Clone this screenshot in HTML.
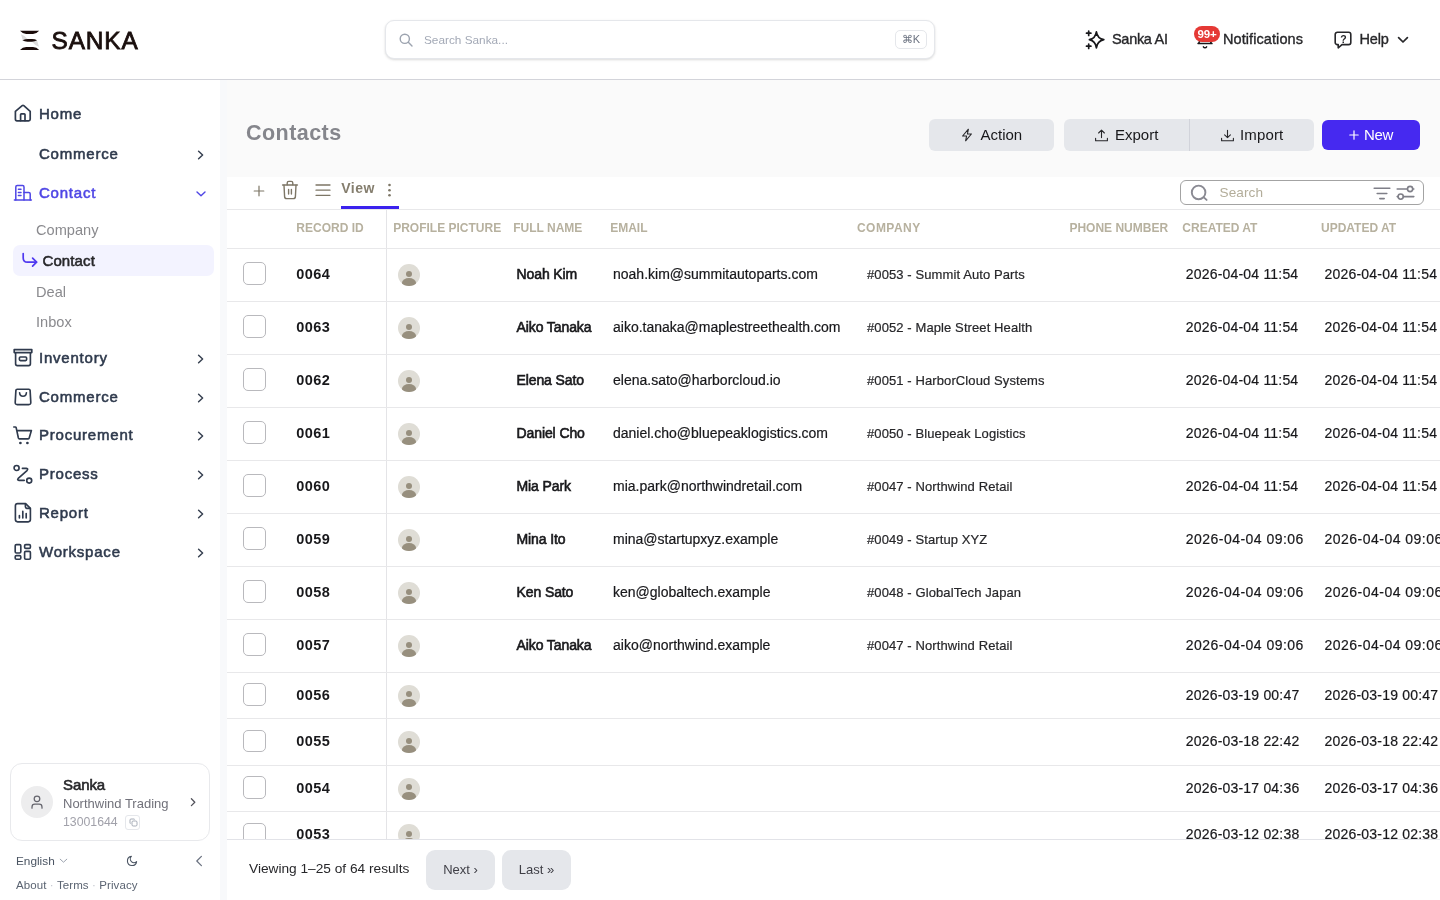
<!DOCTYPE html>
<html lang="en">
<head>
<meta charset="utf-8">
<title>Contacts - Sanka</title>
<style>
*{box-sizing:border-box;margin:0;padding:0}
html,body{width:1440px;height:900px;overflow:hidden;background:#fff}
body{font-family:"Liberation Sans",sans-serif;color:#1f2937;position:relative;-webkit-font-smoothing:antialiased}
#root{position:absolute;left:0;top:0;width:1440px;height:900px;overflow:hidden;will-change:transform}
.abs,.t{position:absolute}
.t{white-space:nowrap;line-height:20px;height:20px}
svg{position:absolute;overflow:visible}
/* header */
#hdr{position:absolute;left:0;top:0;width:1440px;height:80px;background:#fff;border-bottom:1.5px solid #d3d4da;z-index:5}
#gsearch{position:absolute;left:385px;top:20px;width:550px;height:39px;border:1px solid #e5e7eb;border-radius:9px;background:#fff;box-shadow:0 1px 3px rgba(0,0,0,.10),0 1px 2px rgba(0,0,0,.05)}
#kbd{position:absolute;left:895px;top:30px;width:32px;height:19px;border:1px solid #e5e7eb;border-radius:5px;font-size:11px;line-height:17px;text-align:center;color:#6b7280;letter-spacing:.3px}
.hl{font-size:14.5px;color:#27272a;-webkit-text-stroke:.35px #27272a}
#badge{position:absolute;left:1194px;top:26px;width:26px;height:16px;border-radius:8px;background:#e53935;color:#fff;font-size:11.5px;font-weight:bold;line-height:16px;text-align:center;letter-spacing:-.2px}
/* sidebar */
#side{position:absolute;left:0;top:80px;width:220px;height:820px;background:#fff}
.nav{font-size:15px;letter-spacing:.78px;color:#2f3a4d;left:39px;-webkit-text-stroke:.55px #2f3a4d;margin-top:.8px}
.nav.act{color:#4f46e5;-webkit-text-stroke-color:#4f46e5}
.sub{font-size:14.6px;color:#8a8a8e;left:36px}
#subact{position:absolute;left:13px;top:165px;width:201px;height:31px;border-radius:7px;background:#f3f3ff}
#ucard{position:absolute;left:10px;top:683px;width:200px;height:78px;border:1px solid #e8e9ec;border-radius:12px;background:#fff}
#uav{position:absolute;left:21px;top:706px;width:32px;height:32px;border-radius:50%;background:#ededee}
/* main */
#main{position:absolute;left:220px;top:80px;width:1220px;height:820px;background:#fafafa}
#strip{position:absolute;left:0;top:0;width:7px;height:820px;background:#f8f9fb}
#card{position:absolute;left:7px;top:97px;width:1213px;height:723px;background:#fff;overflow:hidden}
.btn{position:absolute;top:39px;height:32px;border-radius:6px;background:#e5e7eb}
.bl{font-size:15px;color:#18181b}
.hline{position:absolute;left:0;width:1213px;height:1px;background:#e8e8ea}
.th{font-size:12px;font-weight:bold;color:#b7b19f}
.cb{position:absolute;left:16.1px;width:22.5px;height:22.5px;border:1px solid #b9b9bd;border-radius:5px;background:#fff}
.av{position:absolute;left:171.2px;width:21.8px;height:21.8px;border-radius:50%;background:#dfddd6;overflow:hidden}
.av:before{content:"";position:absolute;left:7.9px;top:6.4px;width:6px;height:6px;border-radius:50%;background:#978f7e}
.av:after{content:"";position:absolute;left:3.6px;top:13.9px;width:14.6px;height:9.8px;border-radius:50%;background:#978f7e}
.id{font-size:14.5px;font-weight:bold;color:#18181b;left:69.3px;letter-spacing:.45px}
.nm{font-size:14px;color:#18181b;left:289.5px;-webkit-text-stroke:.6px #18181b;letter-spacing:-.1px}
.em{font-size:14px;color:#18181b;left:386px;-webkit-text-stroke:.2px currentColor}
.co{font-size:13px;color:#27272a;left:640px;letter-spacing:.1px;-webkit-text-stroke:.2px currentColor}
.d1{font-size:14px;color:#18181b;left:958.8px;letter-spacing:.19px;-webkit-text-stroke:.2px currentColor}
.d2{font-size:14px;color:#18181b;left:1097.6px;letter-spacing:.19px;-webkit-text-stroke:.2px currentColor}
#foot{position:absolute;left:0;top:661.6px;width:1213px;height:61px;background:#fff;border-top:1.5px solid #e2e3e8}
.pg{position:absolute;top:10.5px;width:69px;height:40px;border-radius:9px;background:#e5e7eb;font-size:13px;color:#3f3f46;text-align:center;line-height:40px}
</style>
</head>
<body>
<div id="root">
<div id="hdr">
<!-- logo -->
<svg style="left:0;top:0" width="60" height="60" viewBox="0 0 60 60">
<defs><linearGradient id="lg1" x1="0" y1="0" x2="1" y2="1"><stop offset="0" stop-color="#e4e2e2"/><stop offset="1" stop-color="#cfcccc"/></linearGradient></defs>
<path d="M21 34.2 L22.6 39.8 L27.6 39 Q24.5 35.5 21 34.2 Z" fill="#dddbdb"/>
<path d="M32 41.8 L37.2 41 L39 46.8 Q35 45.6 32 41.8 Z" fill="#dddbdb"/>
<path d="M20 30.8 L39.2 30.8 Q36.6 33.9 33 33.9 L26.2 33.9 Q22.6 33.9 20 30.8 Z" fill="#1a0b09"/>
<path d="M22.4 40.35 Q25 38.9 28 38.9 L32 38.9 Q35 38.9 37.1 40.35 Q35 41.8 32 41.8 L27.5 41.8 Q24.5 41.8 22.4 40.35 Z" fill="#1a0b09"/>
<path d="M20 49.9 L39.2 49.9 Q36.6 47 33 47 L26.2 47 Q22.6 47 20 49.9 Z" fill="#1a0b09"/>
</svg>
<div class="t" id="logo" style="left:51.5px;top:25.5px;height:30px;line-height:30px;font-size:24.4px;color:#1a0f0d;letter-spacing:.9px;-webkit-text-stroke:.8px #1a0f0d">SANKA</div>
<!-- global search -->
<div id="gsearch"></div>
<svg style="left:399px;top:33px" width="14" height="14" viewBox="0 0 14 14" fill="none" stroke="#9ca3af" stroke-width="1.4" stroke-linecap="round"><circle cx="5.8" cy="5.8" r="4.6"/><path d="M9.3 9.3 L13 13"/></svg>
<div class="t" style="left:424px;top:30px;font-size:11.8px;color:#a3a9b6">Search Sanka...</div>
<div id="kbd">&#8984;K</div>
<!-- Sanka AI -->
<svg style="left:1085px;top:30px" width="20" height="20" viewBox="0 0 20 20" fill="none" stroke="#18181b" stroke-width="1.7" stroke-linecap="round" stroke-linejoin="round">
<path d="M11.4 1.8 Q12.4 8.4 18.8 9.7 Q12.4 11 11.4 17.8 Q10.4 11 4.4 9.7 Q10.4 8.4 11.4 1.8 Z"/>
<path d="M3.7 1 V5.4 M1.5 3.2 H5.9"/>
<path d="M3.7 14 V18.4 M1.5 16.2 H5.9"/>
</svg>
<div class="t hl" style="left:1112px;top:29px;letter-spacing:-.3px">Sanka AI</div>
<!-- notifications -->
<svg style="left:1195px;top:30px" width="20" height="20" viewBox="0 0 20 20" fill="none" stroke="#18181b" stroke-width="1.5" stroke-linecap="round" stroke-linejoin="round">
<path d="M5 8 A5 5 0 0 1 15 8 C15 12.5 17 13.6 17 13.6 H3 C3 13.6 5 12.5 5 8 Z"/>
<path d="M8.4 16.8 A1.9 1.9 0 0 0 11.6 16.8"/>
</svg>
<div id="badge">99+</div>
<div class="t hl" style="left:1223px;top:29px;letter-spacing:.08px">Notifications</div>
<!-- help -->
<svg style="left:1334px;top:31px" width="18" height="18" viewBox="0 0 18 18" fill="none" stroke="#27272a" stroke-width="1.6" stroke-linecap="round" stroke-linejoin="round">
<path d="M3.4 1.2 H14.6 A2.2 2.2 0 0 1 16.8 3.4 V11.4 A2.2 2.2 0 0 1 14.6 13.6 H8 L4.2 16.8 V13.6 H3.4 A2.2 2.2 0 0 1 1.2 11.4 V3.4 A2.2 2.2 0 0 1 3.4 1.2 Z"/>
</svg>
<div class="t" style="left:1339.5px;top:28.5px;font-size:10.5px;font-weight:bold;color:#27272a;width:8px;text-align:center">?</div>
<div class="t hl" style="left:1359.5px;top:29px;letter-spacing:-.2px">Help</div>
<svg style="left:1397px;top:36px" width="12" height="8" viewBox="0 0 12 8" fill="none" stroke="#27272a" stroke-width="1.7" stroke-linecap="round" stroke-linejoin="round"><path d="M1.6 1.6 L6 6 L10.4 1.6"/></svg>
</div>
<div id="side">
<!-- Home -->
<svg style="left:13px;top:23px" width="20" height="20" viewBox="0 0 20 20" fill="none" stroke="#2f3a4d" stroke-width="1.7" stroke-linecap="round" stroke-linejoin="round">
<path d="M2.4 8.4 L9.2 2.6 Q10 2 10.8 2.6 L17.2 8.4 V16.2 Q17.2 17.8 15.6 17.8 H4 Q2.4 17.8 2.4 16.2 Z"/>
<path d="M7.6 17.6 V11.6 Q7.6 10.8 8.4 10.8 H11.2 Q12 10.8 12 11.6 V17.6"/>
</svg>
<div class="t nav" style="top:23px">Home</div>
<div class="t nav" style="top:63px">Commerce</div><svg style="left:197px;top:69.5px" width="8" height="10" viewBox="0 0 8 10" fill="none" stroke="#374151" stroke-width="1.5" stroke-linecap="round" stroke-linejoin="round"><path d="M1.6 1.2 L5.6 5 L1.6 8.8"/></svg>
<!-- Contact -->
<svg style="left:13px;top:103px" width="20" height="20" viewBox="0 0 20 20" fill="none" stroke="#4f46e5" stroke-width="1.5" stroke-linecap="round" stroke-linejoin="round">
<path d="M1.4 17 H18.4"/>
<path d="M2.8 17 V4 Q2.8 2.6 4.2 2.6 H9.6 Q11 2.6 11 4 V17"/>
<path d="M11 9.4 H15.8 Q17.2 9.4 17.2 10.8 V17"/>
<path d="M5.4 6.2 H8 M5.4 9.4 H8 M5.4 12.6 H8"/>
</svg>
<div class="t nav act" style="top:102px">Contact</div>
<svg style="left:196px;top:110.5px" width="10" height="6" viewBox="0 0 10 6" fill="none" stroke="#4f46e5" stroke-width="1.4" stroke-linecap="round" stroke-linejoin="round"><path d="M1 1 L5 4.8 L9 1"/></svg>
<div class="t sub" style="top:140px">Company</div>
<div id="subact"></div>
<svg style="left:21px;top:172px" width="18" height="16" viewBox="0 0 18 16" fill="none" stroke="#4f39f0" stroke-width="1.7" stroke-linecap="round" stroke-linejoin="round">
<path d="M2.2 1.6 V6 Q2.2 10.2 6.4 10.2 H15.4"/><path d="M11.6 6.2 L15.6 10.2 L11.6 14.2"/>
</svg>
<div class="t" style="left:42.5px;top:171px;font-size:15px;color:#27272a;-webkit-text-stroke:.55px #27272a;letter-spacing:.1px">Contact</div>
<div class="t sub" style="top:202px">Deal</div>
<div class="t sub" style="top:232px">Inbox</div>
<!-- Inventory -->
<svg style="left:13px;top:268px" width="20" height="20" viewBox="0 0 20 20" fill="none" stroke="#2f3a4d" stroke-width="1.65" stroke-linecap="round" stroke-linejoin="round">
<path d="M1.2 1.6 H18.8 V4.6 H1.2 Z"/>
<path d="M2.6 4.8 V15.8 Q2.6 17.6 4.4 17.6 H15.6 Q17.4 17.6 17.4 15.8 V4.8"/>
<rect x="6.4" y="9" width="7.2" height="3.6" rx="1"/>
</svg>
<div class="t nav" style="top:267px">Inventory</div><svg style="left:197px;top:273.5px" width="8" height="10" viewBox="0 0 8 10" fill="none" stroke="#374151" stroke-width="1.5" stroke-linecap="round" stroke-linejoin="round"><path d="M1.6 1.2 L5.6 5 L1.6 8.8"/></svg>
<!-- Commerce -->
<svg style="left:13px;top:307px" width="20" height="20" viewBox="0 0 20 20" fill="none" stroke="#2f3a4d" stroke-width="1.65" stroke-linecap="round" stroke-linejoin="round">
<path d="M4.2 2.2 H15.8 Q17 2.2 17.1 3.4 L17.8 15.4 Q17.9 17.6 15.8 17.6 H4.2 Q2.1 17.6 2.2 15.4 L2.9 3.4 Q3 2.2 4.2 2.2 Z"/>
<path d="M6.6 5.8 Q6.8 9.2 10 9.2 Q13.2 9.2 13.4 5.8"/>
</svg>
<div class="t nav" style="top:306px">Commerce</div><svg style="left:197px;top:312.5px" width="8" height="10" viewBox="0 0 8 10" fill="none" stroke="#374151" stroke-width="1.5" stroke-linecap="round" stroke-linejoin="round"><path d="M1.6 1.2 L5.6 5 L1.6 8.8"/></svg>
<!-- Procurement -->
<svg style="left:13px;top:345px" width="20" height="20" viewBox="0 0 20 20" fill="none" stroke="#2f3a4d" stroke-width="1.65" stroke-linecap="round" stroke-linejoin="round">
<path d="M0.8 2 H2.2 Q3 2 3.2 2.8 L5.4 13 Q5.6 13.8 6.4 13.8 H15.2 Q16 13.8 16.2 13 L18.4 5.6 H4"/>
<circle cx="7.4" cy="18" r="1.35" fill="#2f3a4d" stroke="none"/><circle cx="14.4" cy="18" r="1.35" fill="#2f3a4d" stroke="none"/>
</svg>
<div class="t nav" style="top:344px">Procurement</div><svg style="left:197px;top:351px" width="8" height="10" viewBox="0 0 8 10" fill="none" stroke="#374151" stroke-width="1.5" stroke-linecap="round" stroke-linejoin="round"><path d="M1.6 1.2 L5.6 5 L1.6 8.8"/></svg>
<!-- Process -->
<svg style="left:13px;top:384px" width="20" height="20" viewBox="0 0 20 20" fill="none" stroke="#2f3a4d" stroke-width="1.65" stroke-linecap="round" stroke-linejoin="round">
<circle cx="3.6" cy="4" r="2.5"/><circle cx="16.2" cy="16.6" r="2.5"/>
<path d="M9.4 4.4 H13.4 Q15.6 4.6 14 6.6 L5.2 14.4 Q3.8 16.2 6 16.4 H11.2"/>
</svg>
<div class="t nav" style="top:383px">Process</div><svg style="left:197px;top:389.5px" width="8" height="10" viewBox="0 0 8 10" fill="none" stroke="#374151" stroke-width="1.5" stroke-linecap="round" stroke-linejoin="round"><path d="M1.6 1.2 L5.6 5 L1.6 8.8"/></svg>
<!-- Report -->
<svg style="left:13px;top:422px" width="20" height="22" viewBox="0 0 20 22" fill="none" stroke="#2f3a4d" stroke-width="1.65" stroke-linecap="round" stroke-linejoin="round">
<path d="M4.6 1.6 H12.6 L17.4 6.4 V17.6 Q17.4 19.8 15.2 19.8 H4.6 Q2.4 19.8 2.4 17.6 V3.8 Q2.4 1.6 4.6 1.6 Z"/>
<path d="M12.4 1.8 V4.8 Q12.4 6.4 14 6.4 H17.2"/>
<path d="M6.4 13.6 V16 M9.8 9.4 V16 M13.2 11.6 V16"/>
</svg>
<div class="t nav" style="top:422px">Report</div><svg style="left:197px;top:428.5px" width="8" height="10" viewBox="0 0 8 10" fill="none" stroke="#374151" stroke-width="1.5" stroke-linecap="round" stroke-linejoin="round"><path d="M1.6 1.2 L5.6 5 L1.6 8.8"/></svg>
<!-- Workspace -->
<svg style="left:13px;top:462px" width="20" height="20" viewBox="0 0 20 20" fill="none" stroke="#2f3a4d" stroke-width="1.65" stroke-linejoin="round">
<rect x="2.2" y="2.6" width="5.6" height="8.4" rx="1.2"/><rect x="11.6" y="2.6" width="5.8" height="3.8" rx="1.2"/>
<rect x="2.2" y="13.6" width="5.6" height="3.6" rx="1.2"/><rect x="11.6" y="9.4" width="5.8" height="7.8" rx="1.2"/>
</svg>
<div class="t nav" style="top:461px">Workspace</div><svg style="left:197px;top:467.5px" width="8" height="10" viewBox="0 0 8 10" fill="none" stroke="#374151" stroke-width="1.5" stroke-linecap="round" stroke-linejoin="round"><path d="M1.6 1.2 L5.6 5 L1.6 8.8"/></svg>
<!-- user card -->
<div id="ucard"></div>
<div id="uav"></div>
<svg style="left:29px;top:714px" width="16" height="16" viewBox="0 0 16 16" fill="none" stroke="#65656d" stroke-width="1.25" stroke-linecap="round" stroke-linejoin="round">
<circle cx="8" cy="4.8" r="2.8"/><path d="M3 14.2 V13 Q3 10.2 5.8 10.2 H10.2 Q13 10.2 13 13 V14.2"/>
</svg>
<div class="t" style="left:63px;top:695px;font-size:15px;color:#27272a;-webkit-text-stroke:.6px #27272a;letter-spacing:-.1px">Sanka</div>
<div class="t" style="left:63px;top:713.5px;font-size:13px;color:#71717a">Northwind Trading</div>
<div class="t" style="left:63px;top:732px;font-size:12.3px;color:#a1a1aa">13001644</div>
<div class="abs" style="left:125px;top:734.5px;width:15px;height:15px;border:1px solid #e5e7eb;border-radius:3px"></div>
<svg style="left:128.5px;top:738px" width="9" height="9" viewBox="0 0 9 9" fill="none" stroke="#9ca3af" stroke-width="0.9" stroke-linejoin="round"><rect x="3" y="3" width="5" height="5" rx="1.2"/><path d="M1.6 5.6 Q1 5.6 1 5 V2 Q1 1 2 1 H5 Q5.6 1 5.6 1.6"/></svg>
<svg style="left:189px;top:717px" width="8" height="10" viewBox="0 0 8 10" fill="none" stroke="#52525b" stroke-width="1.3" stroke-linecap="round" stroke-linejoin="round"><path d="M2.4 1.8 L5.8 5.2 L2.4 8.6"/></svg>
<!-- bottom -->
<div class="t" style="left:16px;top:771px;font-size:11.8px;color:#4b5563">English</div>
<svg style="left:59px;top:778px" width="9" height="6" viewBox="0 0 9 6" fill="none" stroke="#9ca3af" stroke-width="1" stroke-linecap="round" stroke-linejoin="round"><path d="M1.2 1.2 L4.5 4.2 L7.8 1.2"/></svg>
<svg style="left:126px;top:775px" width="12" height="12" viewBox="0 0 12 12" fill="none" stroke="#4b5563" stroke-width="1.1" stroke-linecap="round" stroke-linejoin="round"><path d="M5.4 1.4 A4.6 4.6 0 1 0 10.6 6.6 A3.6 3.6 0 0 1 5.4 1.4 Z"/></svg>
<svg style="left:193.8px;top:775px" width="10" height="12" viewBox="0 0 10 12" fill="none" stroke="#6b7280" stroke-width="1.25" stroke-linecap="round" stroke-linejoin="round"><path d="M7.4 1.4 L2.8 6 L7.4 10.6"/></svg>
<div class="t" style="left:16px;top:795px;font-size:11.5px;color:#5b6472;letter-spacing:.1px">About <span style="color:#c4c7cf">·</span> Terms <span style="color:#c4c7cf">·</span> Privacy</div>
</div>
<div id="main">
<div id="strip"></div>
<div class="t" id="title" style="left:26px;top:37.5px;height:30px;line-height:30px;font-size:21.5px;font-weight:bold;color:#85868c;letter-spacing:.45px">Contacts</div>
<div class="btn" style="left:709px;width:125px"></div>
<svg style="left:741px;top:48px" width="12" height="14" viewBox="0 0 12 14" fill="none" stroke="#27272a" stroke-width="1.1" stroke-linecap="round" stroke-linejoin="round"><path d="M7.4 1.2 L1.6 8 H5.6 L4.6 12.8 L10.4 6 H6.4 Z"/></svg>
<div class="t bl" style="left:760.5px;top:45px">Action</div>
<div class="btn" style="left:844px;width:250px"></div>
<div class="abs" style="left:969px;top:39px;width:1px;height:32px;background:#d1d3da"></div>
<svg style="left:874px;top:48.5px" width="15" height="13" viewBox="0 0 15 13" fill="none" stroke="#27272a" stroke-width="1.1" stroke-linecap="round" stroke-linejoin="round"><path d="M1.6 9.2 V11.8 H13.4 V9.2"/><path d="M7.5 8.6 V1.2 M4.6 4 L7.5 1.2 L10.4 4"/></svg>
<div class="t bl" style="left:895px;top:45px">Export</div>
<svg style="left:1000px;top:48.5px" width="15" height="13" viewBox="0 0 15 13" fill="none" stroke="#27272a" stroke-width="1.1" stroke-linecap="round" stroke-linejoin="round"><path d="M1.6 9.2 V11.8 H13.4 V9.2"/><path d="M7.5 1.2 V8.6 M4.6 5.8 L7.5 8.6 L10.4 5.8"/></svg>
<div class="t bl" style="left:1020px;top:45px;letter-spacing:.15px">Import</div>
<div class="abs" style="left:1102px;top:39.7px;width:98px;height:30.4px;border-radius:6px;background:#4629f0"></div>
<svg style="left:1128.5px;top:50.3px" width="10" height="10" viewBox="0 0 10 10" fill="none" stroke="#fff" stroke-width="1.2" stroke-linecap="round"><path d="M5 0.8 V9.2 M0.8 5 H9.2"/></svg>
<div class="t bl" style="left:1144px;top:45px;color:#fff;letter-spacing:-.3px">New</div>

<div id="card">
<!-- toolbar -->
<svg style="left:26px;top:8px" width="12" height="12" viewBox="0 0 12 12" fill="none" stroke="#7d7666" stroke-width="1.2" stroke-linecap="round"><path d="M6 1.2 V10.8 M1.2 6 H10.8"/></svg>
<svg style="left:54px;top:3px" width="18" height="20" viewBox="0 0 18 20" fill="none" stroke="#7d7666" stroke-width="1.4" stroke-linecap="round" stroke-linejoin="round">
<path d="M1.6 5 H16.4"/><path d="M6.2 4.8 V3 Q6.2 1.4 7.8 1.4 H10.2 Q11.8 1.4 11.8 3 V4.8"/>
<path d="M3 5.2 L3.6 16.6 Q3.7 18.6 5.7 18.6 H12.3 Q14.3 18.6 14.4 16.6 L15 5.2"/>
<path d="M7.6 9.4 V14 M10.4 9.4 V14"/>
</svg>
<svg style="left:88px;top:7px" width="16" height="12" viewBox="0 0 16 12" fill="none" stroke="#7d7666" stroke-width="1.3" stroke-linecap="round"><path d="M1 1 H15 M1 6.2 H15 M1 11.3 H15"/></svg>
<div class="t" style="left:114.3px;top:1.3000000000000007px;font-size:14px;font-weight:bold;color:#857e6e;letter-spacing:.45px">View</div>
<svg style="left:159.5px;top:6px" width="5" height="14" viewBox="0 0 5 14" fill="#7d7666"><circle cx="2.5" cy="2" r="1.3"/><circle cx="2.5" cy="7.2" r="1.3"/><circle cx="2.5" cy="12.3" r="1.3"/></svg>
<div class="abs" style="left:114.2px;top:28.8px;width:57.8px;height:3.4px;background:#3b22ee"></div>
<!-- table search -->
<div class="abs" style="left:953px;top:3px;width:244px;height:25px;border:1px solid #a3a3a3;border-radius:6px;background:#fff"></div>
<svg style="left:962.5px;top:7px" width="20" height="18" viewBox="0 0 20 18" fill="none" stroke="#8a8a93" stroke-width="1.9" stroke-linecap="round"><circle cx="8.6" cy="8.4" r="6.8"/><path d="M13.8 13.4 L16.6 15.9"/></svg>
<div class="t" style="left:992.5px;top:6px;font-size:13.6px;color:#b3ad9a;letter-spacing:.1px">Search</div>
<svg style="left:1145.5px;top:9.5px" width="18" height="13" viewBox="0 0 18 13" fill="none" stroke="#7f7f88" stroke-width="1.6" stroke-linecap="round"><path d="M1.2 1.3 H16.8 M4.2 6.5 H13.8 M6.8 11.6 H11.2"/></svg>
<svg style="left:1168.5px;top:8px" width="19" height="16" viewBox="0 0 19 16" fill="none" stroke="#7f7f88" stroke-width="1.6" stroke-linecap="round"><path d="M1.2 4 H11.4 M16.8 4 H17.8 M1.2 11.6 H2 M7.4 11.6 H17.8"/><circle cx="14.1" cy="4" r="2.6"/><circle cx="4.7" cy="11.6" r="2.6"/></svg>
<div class="hline" style="top:32px"></div>
<!-- header row -->
<div class="abs" style="left:159px;top:33px;width:1px;height:640px;background:#e4e4e7"></div>
<div class="t th" style="left:69.3px;top:41px">RECORD ID</div>
<div class="t th" style="left:166.2px;top:41px">PROFILE PICTURE</div>
<div class="t th" style="left:286.2px;top:41px">FULL NAME</div>
<div class="t th" style="left:383.2px;top:41px">EMAIL</div>
<div class="t th" style="left:630px;top:41px;letter-spacing:.45px">COMPANY</div>
<div class="t th" style="left:842.4px;top:41px">PHONE NUMBER</div>
<div class="t th" style="left:955.3px;top:41px">CREATED AT</div>
<div class="t th" style="left:1094px;top:41px">UPDATED AT</div>
<!--ROWS-->
<div class="hline" style="top:71px"></div><div class="cb" style="top:85.3px"></div><div class="t id" style="top:87.25px">0064</div><div class="av" style="top:87.2px"></div><div class="t nm" style="top:87.25px">Noah Kim</div><div class="t em" style="top:87.25px">noah.kim@summitautoparts.com</div><div class="t co" style="top:87.8px">#0053 - Summit Auto Parts</div><div class="t d1" style="top:87.25px">2026-04-04 11:54</div><div class="t d2" style="top:87.25px">2026-04-04 11:54</div>
<div class="hline" style="top:124px"></div><div class="cb" style="top:138.3px"></div><div class="t id" style="top:140.25px">0063</div><div class="av" style="top:140.2px"></div><div class="t nm" style="top:140.25px">Aiko Tanaka</div><div class="t em" style="top:140.25px">aiko.tanaka@maplestreethealth.com</div><div class="t co" style="top:140.8px">#0052 - Maple Street Health</div><div class="t d1" style="top:140.25px">2026-04-04 11:54</div><div class="t d2" style="top:140.25px">2026-04-04 11:54</div>
<div class="hline" style="top:177px"></div><div class="cb" style="top:191.3px"></div><div class="t id" style="top:193.25px">0062</div><div class="av" style="top:193.2px"></div><div class="t nm" style="top:193.25px">Elena Sato</div><div class="t em" style="top:193.25px">elena.sato@harborcloud.io</div><div class="t co" style="top:193.8px">#0051 - HarborCloud Systems</div><div class="t d1" style="top:193.25px">2026-04-04 11:54</div><div class="t d2" style="top:193.25px">2026-04-04 11:54</div>
<div class="hline" style="top:230px"></div><div class="cb" style="top:244.3px"></div><div class="t id" style="top:246.25px">0061</div><div class="av" style="top:246.2px"></div><div class="t nm" style="top:246.25px">Daniel Cho</div><div class="t em" style="top:246.25px">daniel.cho@bluepeaklogistics.com</div><div class="t co" style="top:246.8px">#0050 - Bluepeak Logistics</div><div class="t d1" style="top:246.25px">2026-04-04 11:54</div><div class="t d2" style="top:246.25px">2026-04-04 11:54</div>
<div class="hline" style="top:283px"></div><div class="cb" style="top:297.3px"></div><div class="t id" style="top:299.25px">0060</div><div class="av" style="top:299.2px"></div><div class="t nm" style="top:299.25px">Mia Park</div><div class="t em" style="top:299.25px">mia.park@northwindretail.com</div><div class="t co" style="top:299.8px">#0047 - Northwind Retail</div><div class="t d1" style="top:299.25px">2026-04-04 11:54</div><div class="t d2" style="top:299.25px">2026-04-04 11:54</div>
<div class="hline" style="top:336px"></div><div class="cb" style="top:350.3px"></div><div class="t id" style="top:352.25px">0059</div><div class="av" style="top:352.2px"></div><div class="t nm" style="top:352.25px">Mina Ito</div><div class="t em" style="top:352.25px">mina@startupxyz.example</div><div class="t co" style="top:352.8px">#0049 - Startup XYZ</div><div class="t d1" style="top:352.25px;letter-spacing:.47px">2026-04-04 09:06</div><div class="t d2" style="top:352.25px;letter-spacing:.47px">2026-04-04 09:06</div>
<div class="hline" style="top:389px"></div><div class="cb" style="top:403.3px"></div><div class="t id" style="top:405.25px">0058</div><div class="av" style="top:405.2px"></div><div class="t nm" style="top:405.25px">Ken Sato</div><div class="t em" style="top:405.25px">ken@globaltech.example</div><div class="t co" style="top:405.8px">#0048 - GlobalTech Japan</div><div class="t d1" style="top:405.25px;letter-spacing:.47px">2026-04-04 09:06</div><div class="t d2" style="top:405.25px;letter-spacing:.47px">2026-04-04 09:06</div>
<div class="hline" style="top:442px"></div><div class="cb" style="top:456.3px"></div><div class="t id" style="top:458.25px">0057</div><div class="av" style="top:458.2px"></div><div class="t nm" style="top:458.25px">Aiko Tanaka</div><div class="t em" style="top:458.25px">aiko@northwind.example</div><div class="t co" style="top:458.8px">#0047 - Northwind Retail</div><div class="t d1" style="top:458.25px;letter-spacing:.47px">2026-04-04 09:06</div><div class="t d2" style="top:458.25px;letter-spacing:.47px">2026-04-04 09:06</div>
<div class="hline" style="top:495px"></div><div class="cb" style="top:506.45px"></div><div class="t id" style="top:507.75px">0056</div><div class="av" style="top:507.8px"></div><div class="t d1" style="top:507.75px">2026-03-19 00:47</div><div class="t d2" style="top:507.75px">2026-03-19 00:47</div>
<div class="hline" style="top:541px"></div><div class="cb" style="top:552.95px"></div><div class="t id" style="top:554.25px">0055</div><div class="av" style="top:554.3px"></div><div class="t d1" style="top:554.25px">2026-03-18 22:42</div><div class="t d2" style="top:554.25px">2026-03-18 22:42</div>
<div class="hline" style="top:588px"></div><div class="cb" style="top:599.45px"></div><div class="t id" style="top:600.75px">0054</div><div class="av" style="top:600.8px"></div><div class="t d1" style="top:600.75px">2026-03-17 04:36</div><div class="t d2" style="top:600.75px">2026-03-17 04:36</div>
<div class="hline" style="top:634px"></div><div class="cb" style="top:645.95px"></div><div class="t id" style="top:647.25px">0053</div><div class="av" style="top:647.3px"></div><div class="t d1" style="top:647.25px">2026-03-12 02:38</div><div class="t d2" style="top:647.25px">2026-03-12 02:38</div>
<!--/ROWS-->
<div id="foot">
<div class="t" style="left:22px;top:19.9px;font-size:13.7px;color:#27272a">Viewing 1–25 of 64 results</div>
<div class="pg" style="left:199px">Next ›</div>
<div class="pg" style="left:275px">Last »</div>
</div>
</div>
</div>
</div>
</body>
</html>
